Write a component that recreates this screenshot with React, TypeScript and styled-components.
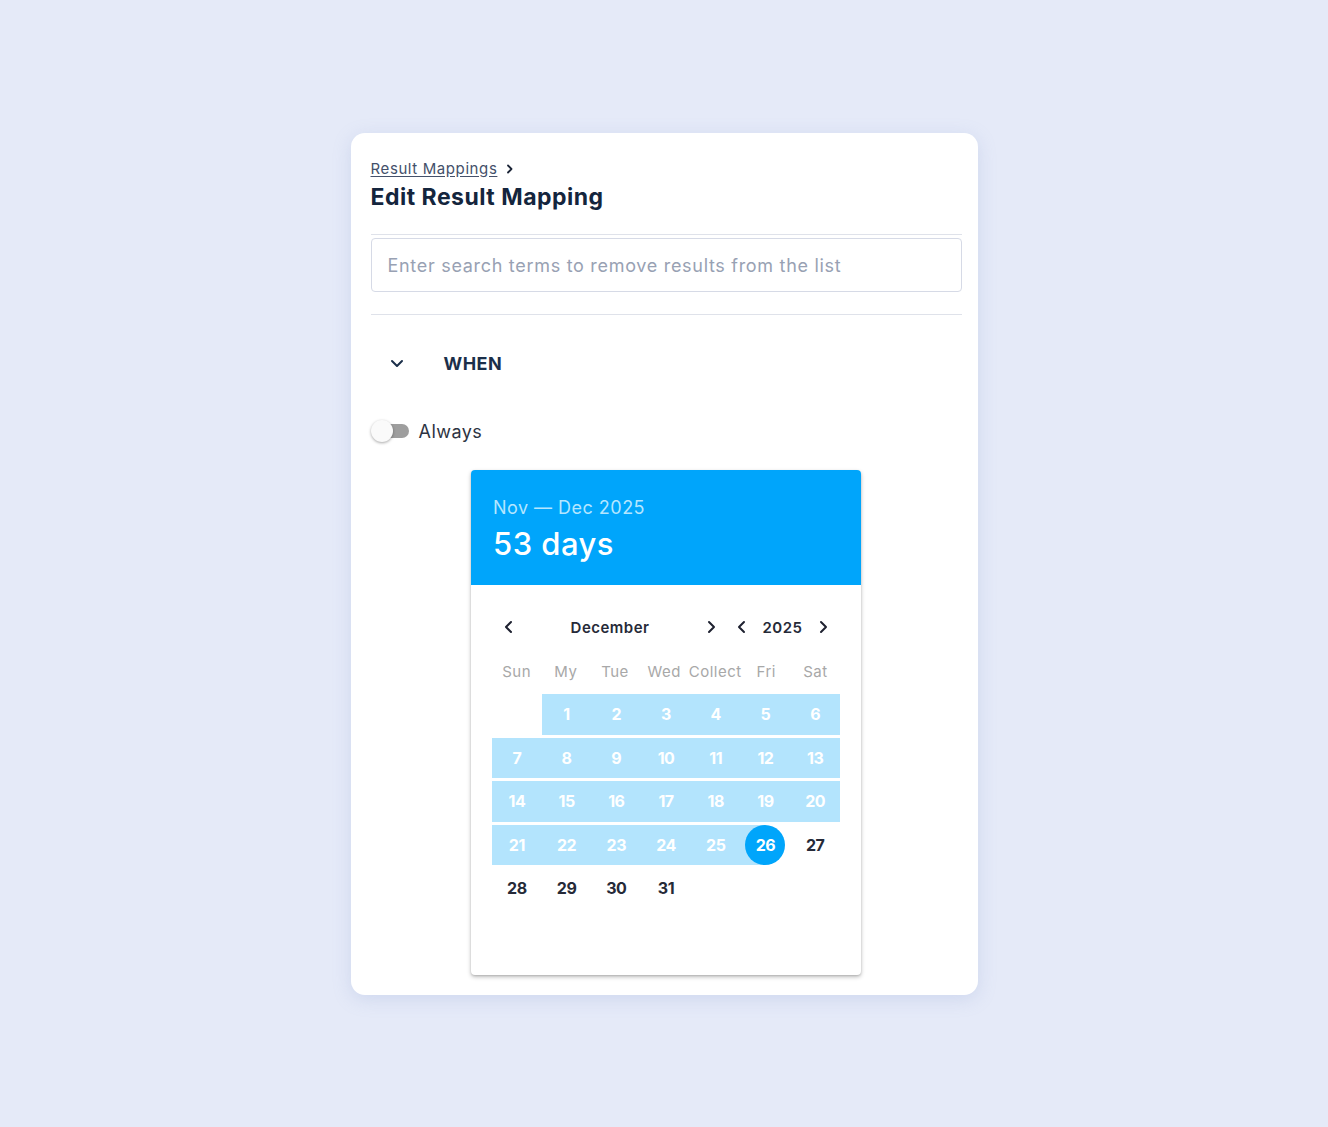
import React from "react";
import styled, { createGlobalStyle } from "styled-components";

const GlobalStyle = createGlobalStyle`
    body {
        margin: 0;
        background: #e5eaf8;
        font-family: "Inter", "Noto Sans", sans-serif;
        letter-spacing: 0.03em;
    }
`;

const weekDays = ["Sun", "My", "Tue", "Wed", "Collect", "Fri", "Sat"];

type Day = { n: number | null; range?: boolean; selected?: boolean };

const buildWeeks = (): Day[][] => {
    const days: Day[] = [{ n: null }];
    for (let i = 1; i <= 31; i++) {
        days.push({ n: i, range: i <= 25, selected: i === 26 });
    }
    const weeks: Day[][] = [];
    for (let i = 0; i < days.length; i += 7) weeks.push(days.slice(i, i + 7));
    return weeks;
};

const Chevron = ({ dir }: { dir: "left" | "right" | "down" }) => {
    const d =
        dir === "left" ? "M10 3 L5 8 L10 13" : dir === "right" ? "M6 3 L11 8 L6 13" : "M3 6 L8 11 L13 6";
    return (
        <svg width="16" height="16" viewBox="0 0 16 16" fill="none">
            <path d={d} stroke="currentColor" strokeWidth="2" strokeLinecap="round" strokeLinejoin="round" />
        </svg>
    );
};

export default function App() {
    const weeks = buildWeeks();
    return (
        <>
            <GlobalStyle />
            <Page>
                <Card>
                    <Crumbs>
                        <CrumbLink>Result Mappings</CrumbLink>
                        <CrumbArrow>
                            <svg width="10" height="10" viewBox="0 0 10 10" fill="none">
                                <path d="M3 1.5 L6.5 5 L3 8.5" stroke="#1b2436" strokeWidth="1.8" strokeLinecap="round" strokeLinejoin="round" />
                            </svg>
                        </CrumbArrow>
                    </Crumbs>
                    <Title>Edit Result Mapping</Title>
                    <Divider />
                    <SearchInput placeholder="Enter search terms to remove results from the list" />
                    <Divider $gap={22} />
                    <SectionHead>
                        <SectionToggle>
                            <Chevron dir="down" />
                        </SectionToggle>
                        <SectionTitle>WHEN</SectionTitle>
                    </SectionHead>
                    <SwitchRow>
                        <Switch>
                            <Knob />
                        </Switch>
                        <SwitchLabel>Always</SwitchLabel>
                    </SwitchRow>
                    <Picker>
                        <PickerHead>
                            <RangeText>Nov — Dec 2025</RangeText>
                            <DaysText>53 days</DaysText>
                        </PickerHead>
                        <PickerBody>
                            <NavRow>
                                <NavGroup $month>
                                    <NavBtn><Chevron dir="left" /></NavBtn>
                                    <NavLabel>December</NavLabel>
                                    <NavBtn><Chevron dir="right" /></NavBtn>
                                </NavGroup>
                                <NavGroup>
                                    <NavBtn><Chevron dir="left" /></NavBtn>
                                    <NavLabel>2025</NavLabel>
                                    <NavBtn><Chevron dir="right" /></NavBtn>
                                </NavGroup>
                            </NavRow>
                            <WeekRow>
                                {weekDays.map((w) => (
                                    <WeekDay key={w}>{w}</WeekDay>
                                ))}
                            </WeekRow>
                            <Weeks>
                                {weeks.map((week, wi) => (
                                    <WeekLine key={wi}>
                                        {week.map((d, di) => (
                                            <DayCell key={di} $range={!!d.range} $selected={!!d.selected}>
                                                {d.n !== null && <DayNum $selected={!!d.selected} $range={!!d.range}>{d.n}</DayNum>}
                                            </DayCell>
                                        ))}
                                    </WeekLine>
                                ))}
                            </Weeks>
                        </PickerBody>
                    </Picker>
                </Card>
            </Page>
        </>
    );
}

const Page = styled.div`
    min-height: 1127px;
    padding-top: 133px;
    box-sizing: border-box;
    display: flex;
    justify-content: center;
`;

const Card = styled.div`
    width: 627px;
    box-sizing: border-box;
    padding: 24px 16px 20px 20px;
    background: #fff;
    border-radius: 14px;
    box-shadow: 0 4px 18px rgba(140, 160, 210, 0.25);
    display: flex;
    flex-direction: column;
    height: 862px;
`;

const Crumbs = styled.div`
    display: flex;
    align-items: center;
    gap: 8px;
    height: 22px;
`;

const CrumbLink = styled.a`
    font-size: 15px;
    letter-spacing: 0.6px;
    color: #44506a;
    text-decoration: underline;
    text-underline-offset: 2px;
    cursor: pointer;
`;

const CrumbArrow = styled.span`
    display: flex;
    margin-top: 2px;
`;

const Title = styled.h1`
    margin: 3px 0 0;
    font-size: 23px;
    font-weight: 700;
    color: #14253d;
    line-height: 30px;
    letter-spacing: 0.5px;
`;

const Divider = styled.div<{ $gap?: number }>`
    height: 1px;
    background: #dfe2ea;
    margin-top: ${(p) => p.$gap ?? 22}px;
`;

const SearchInput = styled.input`
    margin-top: 3px;
    height: 54px;
    box-sizing: border-box;
    border: 1px solid #d6dae6;
    border-radius: 4px;
    padding: 0 16px;
    font-family: inherit;
    font-size: 18px;
    letter-spacing: 0.7px;
    color: #333;
    outline: none;
    &::placeholder {
        color: #98a1b3;
    }
`;

const SectionHead = styled.div`
    display: flex;
    align-items: center;
    height: 52px;
    margin-top: 22px;
`;

const SectionToggle = styled.span`
    display: flex;
    width: 52px;
    justify-content: center;
    color: #1b2f4a;
`;

const SectionTitle = styled.span`
    margin-left: 21px;
    font-size: 18px;
    font-weight: 700;
    color: #1b2f4a;
`;

const SwitchRow = styled.div`
    display: flex;
    align-items: center;
    gap: 10px;
    margin-top: 27px;
    height: 30px;
`;

const Switch = styled.span`
    position: relative;
    width: 37px;
    height: 14px;
    border-radius: 7px;
    background: #9e9e9e;
    margin-left: 1px;
`;

const Knob = styled.span`
    position: absolute;
    left: -1px;
    top: -4px;
    width: 22px;
    height: 22px;
    border-radius: 50%;
    background: #fafafa;
    box-shadow: 0 1px 3px rgba(0, 0, 0, 0.35);
`;

const SwitchLabel = styled.span`
    font-size: 18px;
    color: #2d3342;
`;

const Picker = styled.div`
    align-self: center;
    margin-top: 24px;
    width: 390px;
    height: 505px;
    border-radius: 4px;
    overflow: hidden;
    background: #fff;
    box-shadow: 0 2px 4px rgba(0, 0, 0, 0.25), 0 1px 2px rgba(0, 0, 0, 0.12);
    display: flex;
    flex-direction: column;
`;

const PickerHead = styled.div`
    background: #00a5fb;
    height: 115px;
    box-sizing: border-box;
    padding: 26px 22px 0;
`;

const RangeText = styled.div`
    font-size: 18px;
    color: #b4e6ff;
    line-height: 24px;
`;

const DaysText = styled.div`
    font-size: 31px;
    font-weight: 500;
    color: #fff;
    line-height: 44px;
    margin-top: 2px;
`;

const PickerBody = styled.div`
    padding: 27px 21px 0;
`;

const NavRow = styled.div`
    display: flex;
    align-items: center;
    height: 30px;
`;

const NavGroup = styled.div<{ $month?: boolean }>`
    display: flex;
    align-items: center;
    justify-content: space-between;
    width: ${(p) => (p.$month ? "218px" : "97px")};
    margin-left: ${(p) => (p.$month ? "9px" : "15px")};
`;

const NavBtn = styled.span`
    display: flex;
    color: #1e2130;
`;

const NavLabel = styled.span`
    font-size: 15px;
    font-weight: 600;
    color: #262a38;
`;

const WeekRow = styled.div`
    display: grid;
    grid-template-columns: repeat(7, 1fr);
    margin-top: 15px;
    height: 28px;
    align-items: center;
`;

const WeekDay = styled.span`
    text-align: center;
    font-size: 15px;
    color: #a8a8a8;
    white-space: nowrap;
`;

const Weeks = styled.div`
    display: flex;
    flex-direction: column;
    gap: 3px;
    margin-top: 9px;
`;

const WeekLine = styled.div`
    display: grid;
    grid-template-columns: repeat(7, 1fr);
    height: 40.5px;
`;

const DayCell = styled.div<{ $range: boolean; $selected: boolean }>`
    display: flex;
    align-items: center;
    justify-content: center;
    background: ${(p) => (p.$range ? "#b3e4fd" : p.$selected ? "linear-gradient(to right, #b3e4fd 50%, transparent 50%)" : "transparent")};
`;

const DayNum = styled.span<{ $selected: boolean; $range: boolean }>`
    width: 40px;
    height: 40px;
    border-radius: 50%;
    display: flex;
    align-items: center;
    justify-content: center;
    font-size: 16px;
    font-weight: 700;
    letter-spacing: -0.5px;
    color: ${(p) => (p.$selected || p.$range ? "#fff" : "#262a38")};
    background: ${(p) => (p.$selected ? "#00a5fb" : "transparent")};
`;
